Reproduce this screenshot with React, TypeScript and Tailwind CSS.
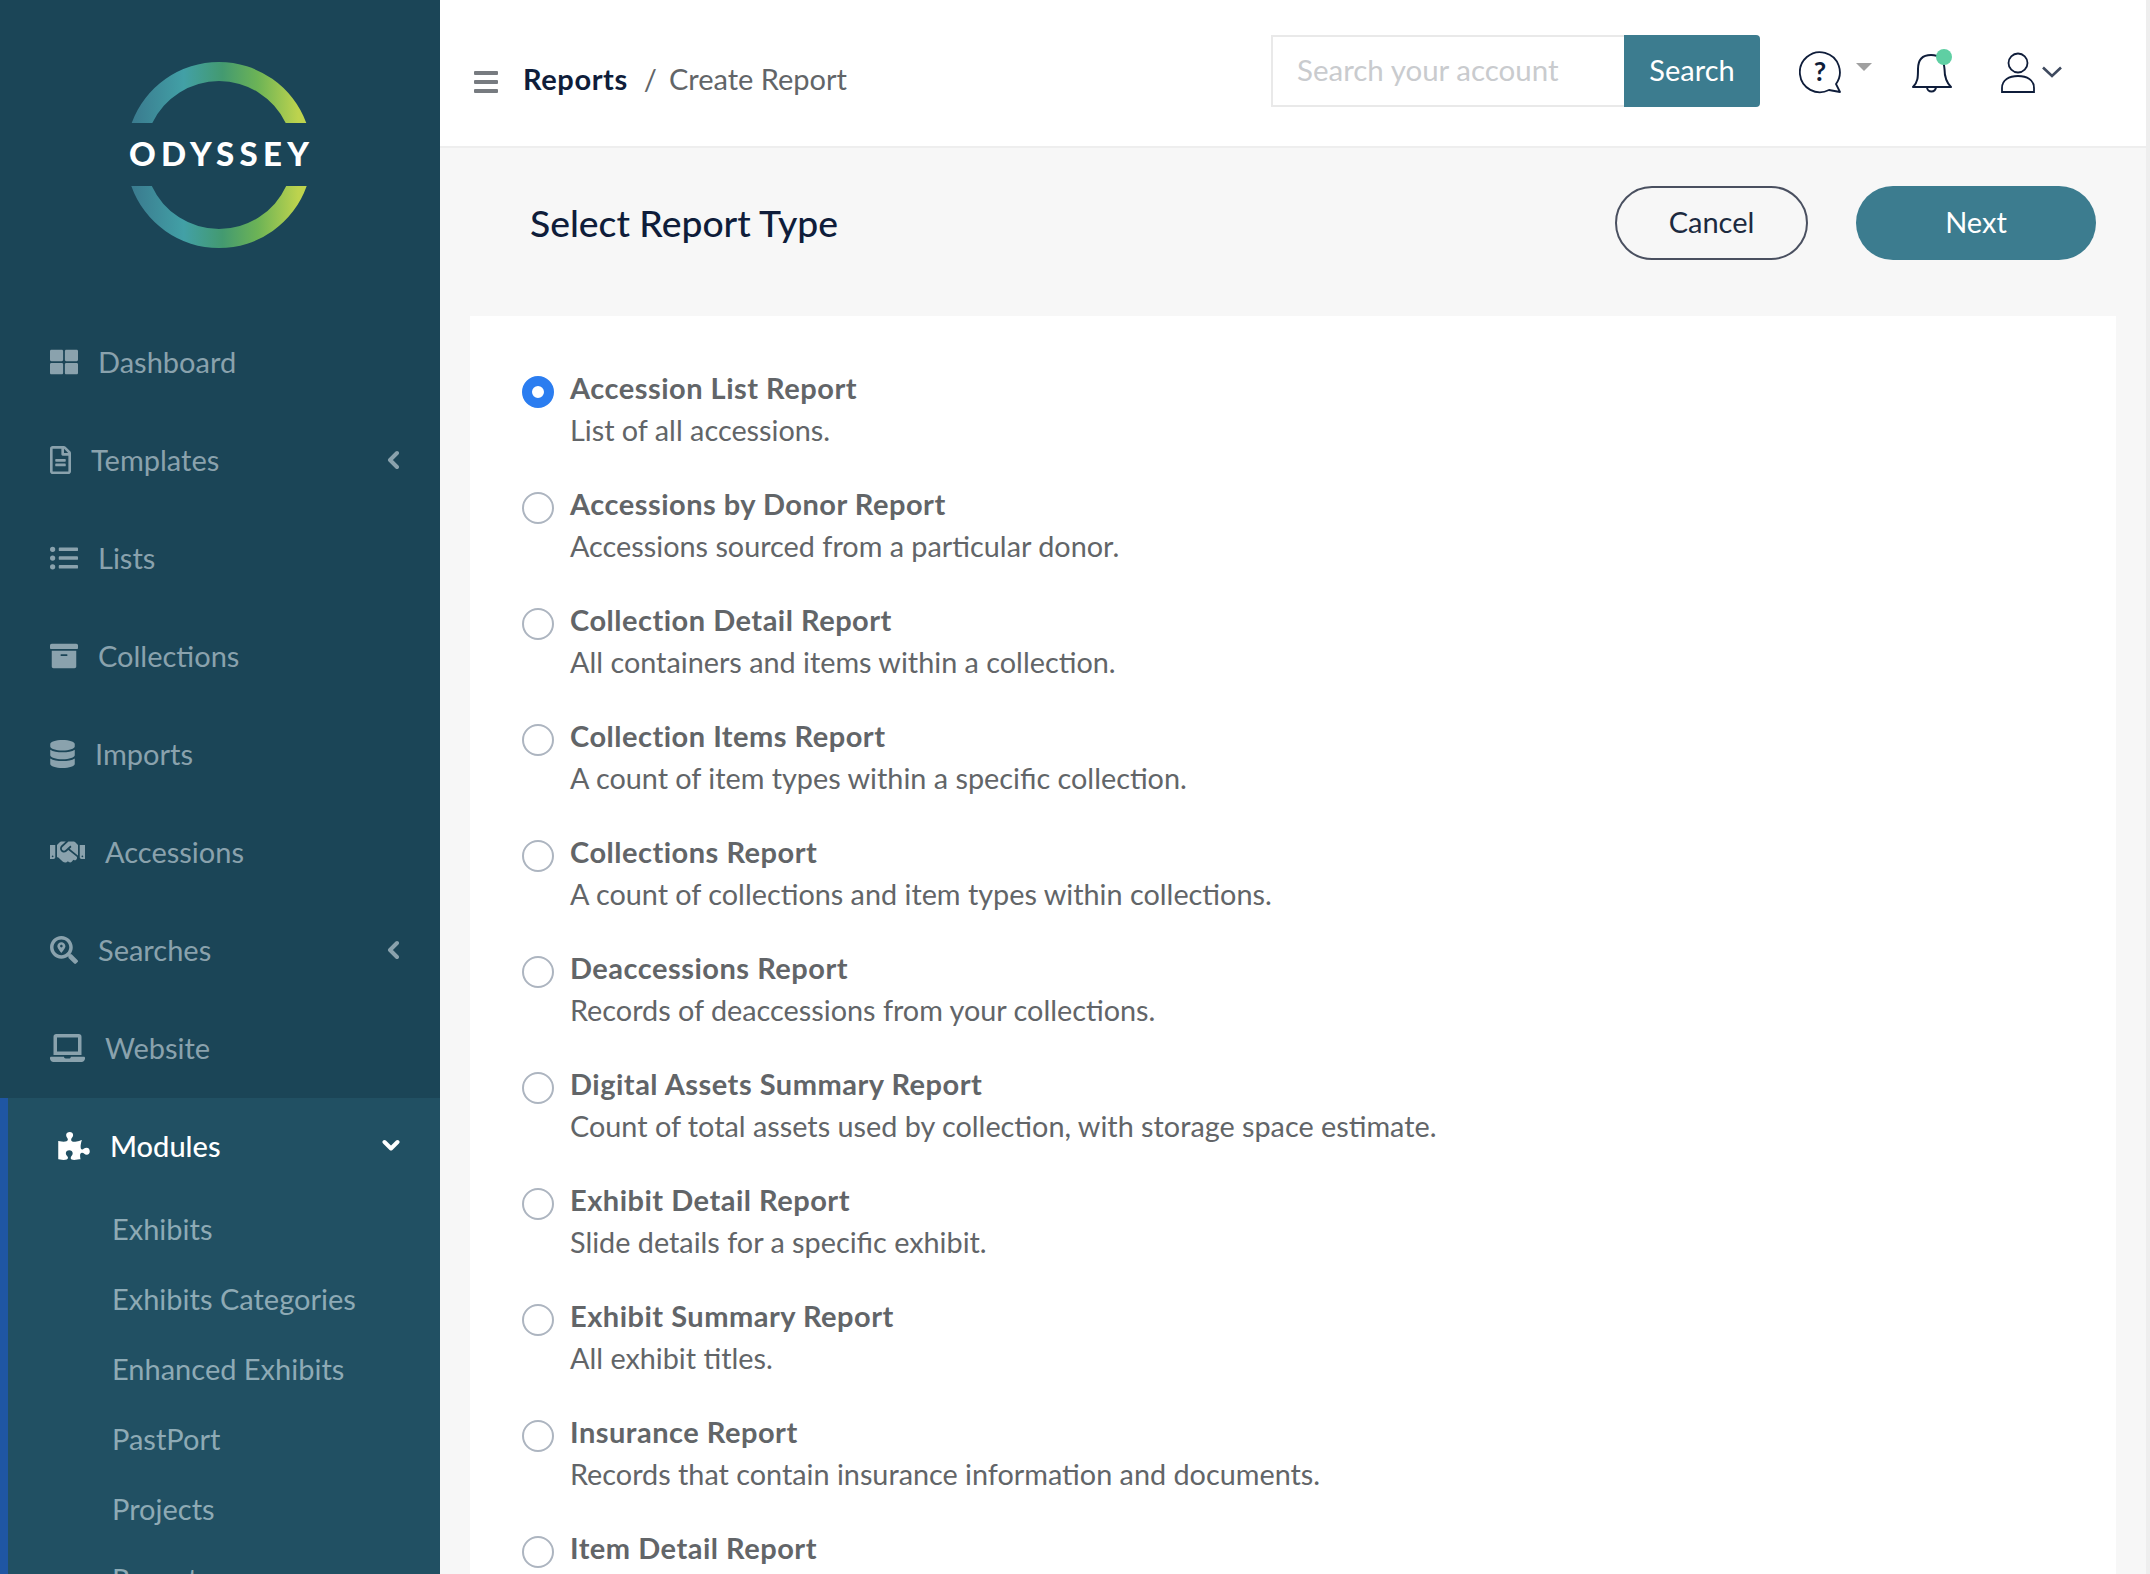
import type { ReactNode } from 'react';
import {
  FaArchive,
  FaDatabase,
  FaHandshake,
  FaLaptop,
  FaListUl,
  FaPuzzlePiece,
  FaRegFileAlt,
  FaSearchLocation,
  FaThLarge,
} from 'react-icons/fa';

const navItems: { label: string; icon: ReactNode; arrow?: boolean }[] = [
  { label: 'Dashboard', icon: <FaThLarge className="w-[28px] h-[28px]" /> },
  { label: 'Templates', icon: <FaRegFileAlt className="w-[21px] h-[28px]" />, arrow: true },
  { label: 'Lists', icon: <FaListUl className="w-[28px] h-[28px]" /> },
  { label: 'Collections', icon: <FaArchive className="w-[28px] h-[28px]" /> },
  { label: 'Imports', icon: <FaDatabase className="w-[25px] h-[28px]" /> },
  { label: 'Accessions', icon: <FaHandshake className="w-[35px] h-[28px]" /> },
  { label: 'Searches', icon: <FaSearchLocation className="w-[28px] h-[28px]" />, arrow: true },
  { label: 'Website', icon: <FaLaptop className="w-[35px] h-[30px]" /> },
];

const subItems = ['Exhibits', 'Exhibits Categories', 'Enhanced Exhibits', 'PastPort', 'Projects', 'Reports'];

const reports = [
  ['Accession List Report', 'List of all accessions.'],
  ['Accessions by Donor Report', 'Accessions sourced from a particular donor.'],
  ['Collection Detail Report', 'All containers and items within a collection.'],
  ['Collection Items Report', 'A count of item types within a specific collection.'],
  ['Collections Report', 'A count of collections and item types within collections.'],
  ['Deaccessions Report', 'Records of deaccessions from your collections.'],
  ['Digital Assets Summary Report', 'Count of total assets used by collection, with storage space estimate.'],
  ['Exhibit Detail Report', 'Slide details for a specific exhibit.'],
  ['Exhibit Summary Report', 'All exhibit titles.'],
  ['Insurance Report', 'Records that contain insurance information and documents.'],
  ['Item Detail Report', ''],
];

const Logo = () => (
  <svg width="200" height="200" viewBox="0 0 200 200" className="block">
    <defs>
      <linearGradient id="ring" gradientUnits="userSpaceOnUse" x1="12" x2="188" y1="0" y2="0">
        <stop offset="0" stopColor="#3a7a8e" />
        <stop offset="0.3" stopColor="#42a0a6" />
        <stop offset="0.52" stopColor="#439a70" />
        <stop offset="0.72" stopColor="#6cb356" />
        <stop offset="0.95" stopColor="#bdd34e" />
      </linearGradient>
    </defs>
    <path d="M12.7 68 A93 93 0 0 1 187.3 68 L166.7 68 A74 74 0 0 0 33.3 68 Z" fill="url(#ring)" />
    <path d="M12.3 131 A93 93 0 0 0 187.7 131 L167.2 131 A74 74 0 0 1 32.8 131 Z" fill="url(#ring)" />
    <text
      x="10"
      y="111"
      textLength="180"
      lengthAdjust="spacing"
      fill="#ffffff"
      fontSize="33"
      fontWeight="900"
      fontFamily="Lato, sans-serif"
    >
      ODYSSEY
    </text>
  </svg>
);

const ChevronLeft = () => (
  <svg width="12" height="20" viewBox="0 0 12 20" fill="none" className="ml-auto">
    <path d="M10 3 L3 10 L10 17" stroke="currentColor" strokeWidth="4" strokeLinecap="round" strokeLinejoin="round" />
  </svg>
);

const Sidebar = () => (
  <aside className="w-[440px] shrink-0 h-full bg-[#1b4557] overflow-hidden text-[#8aa2ad]">
    <div className="h-[313px] pt-[55px] pl-[119px]">
      <Logo />
    </div>
    {navItems.map((item) => (
      <div key={item.label} className="h-[98px] flex items-center pl-[50px] pr-[41px] gap-[20px]">
        {item.icon}
        <span className="text-[29px]">{item.label}</span>
        {item.arrow && <ChevronLeft />}
      </div>
    ))}
    <div className="mt-[1px] bg-[#215063] border-l-[8px] border-[#1f56a3] h-[600px]">
      <div className="h-[96px] flex items-center pl-[50px] pr-[40px] gap-[20px] text-white">
        <FaPuzzlePiece className="w-[32px] h-[28px]" />
        <span className="text-[29px] font-medium">Modules</span>
        <svg width="18" height="14" viewBox="0 0 18 14" fill="none" className="ml-auto">
          <path d="M2.5 3 L9 9.5 L15.5 3" stroke="currentColor" strokeWidth="4" strokeLinecap="round" strokeLinejoin="round" />
        </svg>
      </div>
      {subItems.map((name) => (
        <div key={name} className="h-[70px] flex items-center pl-[104px] text-[29px] text-[#8eaab5]">
          {name}
        </div>
      ))}
    </div>
  </aside>
);

const Header = () => (
  <header className="h-[148px] shrink-0 bg-white border-b-2 border-[#eeeeee] flex items-center pl-[34px] pr-[84px]">
    <div className="flex items-center mt-[12px]">
      <svg width="24" height="22" viewBox="0 0 24 22" className="block mt-[6px]">
        <rect y="0" width="24" height="4" rx="1" fill="#777b80" />
        <rect y="9" width="24" height="4" rx="1" fill="#777b80" />
        <rect y="18" width="24" height="4" rx="1" fill="#777b80" />
      </svg>
      <span className="ml-[25px] text-[29px] font-bold tracking-[0.6px] text-[#0f1d3a]">Reports</span>
      <span className="ml-[16px] text-[29px] text-[#626568]">/</span>
      <span className="ml-[12px] text-[29px] text-[#626568]">Create Report</span>
    </div>
    <div className="ml-auto flex items-center mb-[4px]">
      <div className="w-[353px] h-[72px] border-2 border-[#e9e9e9] border-r-0 flex items-center pl-[24px] pb-[2px] text-[29.5px] text-[#c9cbce]">
        Search your account
      </div>
      <div className="w-[136px] h-[72px] bg-[#3c7c8f] rounded-r-[4px] flex items-center justify-center pb-[2px] text-[29px] text-white">
        Search
      </div>
      <svg width="44" height="44" viewBox="0 0 44 44" fill="none" className="ml-[39px] mt-[4px]">
        <path
          d="M30 39 A20 20 0 1 1 37 33 L41 41 Z"
          stroke="#0f1d3a"
          strokeWidth="1.8"
          strokeLinejoin="round"
        />
        <text x="21" y="30" textAnchor="middle" fontSize="27" fontWeight="700" fill="#0f1d3a" fontFamily="Lato, sans-serif">
          ?
        </text>
      </svg>
      <svg width="16" height="8" viewBox="0 0 16 8" className="ml-[13px] -mt-[8px]">
        <path d="M0 0 H16 L8 8 Z" fill="#a0a0a0" />
      </svg>
      <svg width="42" height="46" viewBox="0 0 42 46" fill="none" className="ml-[39px] mt-[2px]">
        <path
          d="M2 38 C7 33 7 28 7 20 C7 10 12 6 20 6 C28 6 33 10 33.5 20 C33.5 28 35 33 40 38 Z"
          stroke="#0f1d3a"
          strokeWidth="2"
          strokeLinejoin="round"
        />
        <path d="M16 38 A4.5 4.5 0 1 0 25 38" stroke="#0f1d3a" strokeWidth="2" />
        <circle cx="33" cy="8" r="8" fill="#5fcfa3" />
      </svg>
      <svg width="34" height="42" viewBox="0 0 34 42" fill="none" className="ml-[48px] mt-[4px]">
        <circle cx="17" cy="11" r="9.5" stroke="#0f1d3a" strokeWidth="1.8" />
        <path d="M1 40 V36 C1 28 8 24 17 24 C26 24 33 28 33 36 V40 Z" stroke="#0f1d3a" strokeWidth="1.8" />
      </svg>
      <svg width="20" height="12" viewBox="0 0 20 12" fill="none" className="ml-[7px] mt-[2px]">
        <path d="M1 1.5 L10 10 L19 1.5" stroke="#3f4a5f" strokeWidth="2.6" />
      </svg>
    </div>
  </header>
);

const ReportRow = ({ title, desc, checked }: { title: string; desc: string; checked: boolean }) => (
  <div className="flex h-[116px]">
    {checked ? (
      <div className="w-[32px] h-[32px] mt-[9px] rounded-full border-[10px] border-[#2b7df0] bg-white shrink-0" />
    ) : (
      <div className="w-[32px] h-[32px] mt-[9px] rounded-full border-2 border-[#adb5c0] bg-white shrink-0" />
    )}
    <div className="ml-[16px] text-[28.8px] leading-[42px] text-[#626568]">
      <div className="font-bold text-[29px] tracking-[0.5px]">{title}</div>
      {desc && <div>{desc}</div>}
    </div>
  </div>
);

export default function App() {
  return (
    <div className="w-[2150px] h-[1574px] flex overflow-hidden bg-[#f7f7f7] font-['Lato',sans-serif]">
      <Sidebar />
      <div className="flex-1 min-w-0 flex flex-col border-r-4 border-[#eeeeee]">
        <Header />
        <div className="flex items-center h-[168px] shrink-0 pl-[90px] pr-[50px] pb-[18px]">
          <h1 className="text-[37.3px] font-medium text-[#0f1d3a]">Select Report Type</h1>
          <button className="ml-auto w-[193px] h-[74px] pb-[2px] rounded-full border-2 border-[#4a5060] text-[29px] text-[#1c2a40]">
            Cancel
          </button>
          <button className="ml-[48px] w-[240px] h-[74px] pb-[2px] rounded-full bg-[#3c7c8f] text-[29px] text-white">
            Next
          </button>
        </div>
        <div className="mx-[30px] flex-1 bg-white pt-[51px] pl-[52px] overflow-hidden">
          {reports.map(([title, desc], i) => (
            <ReportRow key={title} title={title} desc={desc} checked={i === 0} />
          ))}
        </div>
      </div>
    </div>
  );
}
